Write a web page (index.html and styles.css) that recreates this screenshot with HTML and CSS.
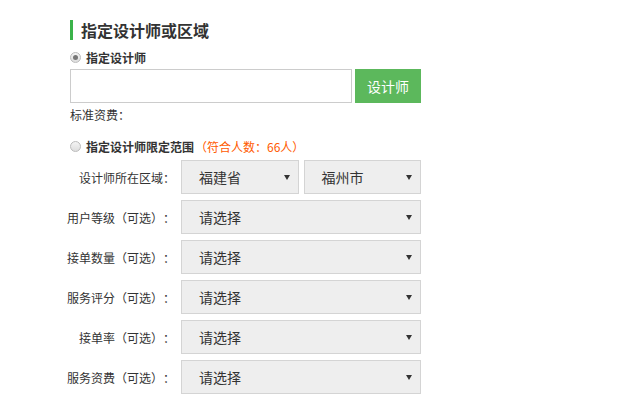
FILE: index.html
```html
<!DOCTYPE html>
<html>
<head>
<meta charset="utf-8">
<link rel="stylesheet" href="styles.css">
</head>
<body>
<div class="panel">
  <h2 class="title">指定设计师或区域</h2>
  <label class="radio-line"><span class="radio checked"></span><b>指定设计师</b></label>
  <div class="search">
    <input class="search-input" type="text">
    <button class="btn">设计师</button>
  </div>
  <div class="fee">标准资费：</div>
  <label class="radio-line second"><span class="radio"></span><b>指定设计师限定范围</b><span class="count">（符合人数：66人）</span></label>
  <div class="rows">
    <div class="row">
      <span class="lbl">设计师所在区域：</span>
      <div class="pair">
        <div class="sel">福建省<i class="arrow"></i></div>
        <div class="sel">福州市<i class="arrow"></i></div>
      </div>
    </div>
    <div class="row"><span class="lbl">用户等级（可选）：</span><div class="sel wide">请选择<i class="arrow"></i></div></div>
    <div class="row"><span class="lbl">接单数量（可选）：</span><div class="sel wide">请选择<i class="arrow"></i></div></div>
    <div class="row"><span class="lbl">服务评分（可选）：</span><div class="sel wide">请选择<i class="arrow"></i></div></div>
    <div class="row"><span class="lbl">接单率（可选）：</span><div class="sel wide">请选择<i class="arrow"></i></div></div>
    <div class="row"><span class="lbl">服务资费（可选）：</span><div class="sel wide">请选择<i class="arrow"></i></div></div>
  </div>
</div>
</body>
</html>
```
FILE: styles.css
```css
html, body { margin: 0; padding: 0; background: #fff; }
body { font-family: "Noto Sans CJK SC", "Noto Sans", sans-serif; color: #333; font-size: 12px; text-spacing-trim: space-all; }
.panel { width: 351px; margin-left: 70px; padding-top: 20px; }
.title { margin: 0; height: 20px; line-height: 20px; border-left: 3px solid #3bb34a; padding-left: 8px; font-size: 16px; font-weight: bold; color: #333; }
.radio-line { display: flex; align-items: center; height: 16px; margin-top: 9px; font-size: 12px; }
.radio-line b { font-weight: bold; }
.radio { width: 11px; height: 11px; border-radius: 50%; border: 1px solid #bbb; background: linear-gradient(#f4f4f4, #ddd); margin-right: 5px; box-sizing: border-box; position: relative; }
.radio.checked::after { content: ""; position: absolute; left: 2px; top: 2px; width: 5px; height: 5px; border-radius: 50%; background: #777; }
.second { margin-top: 14px; }
.count { color: #ff5a00; margin-left: 1px; }
.search { display: flex; margin-top: 4px; height: 34px; }
.search-input { flex: 0 0 282px; box-sizing: border-box; height: 34px; border: 1px solid #ccc; margin: 0; padding: 0 8px; outline: none; }
.btn { margin-left: 3px; flex: 1; height: 34px; border: 0; background: #5cb85c; color: #fff; font-family: inherit; font-size: 14px; padding: 0; }
.fee { margin-top: 3px; line-height: 18px; }
.rows { display: flex; flex-direction: column; gap: 6px; margin-top: 6px; }
.row { display: flex; align-items: center; justify-content: flex-end; height: 34px; }
.lbl { flex: none; margin-right: 6px; white-space: nowrap; color: #333; }
.pair { flex: none; width: 240px; display: flex; gap: 5px; }
.pair .sel { flex: 1; }
.sel { position: relative; box-sizing: border-box; height: 34px; line-height: 32px; border: 1px solid #d4d4d4; background: #eeeeee; padding-left: 17px; font-size: 14px; color: #333; }
.sel.wide { flex: none; width: 240px; }
.arrow { position: absolute; right: 8px; top: 14px; width: 0; height: 0; border-left: 3px solid transparent; border-right: 3px solid transparent; border-top: 5px solid #333; }
```
